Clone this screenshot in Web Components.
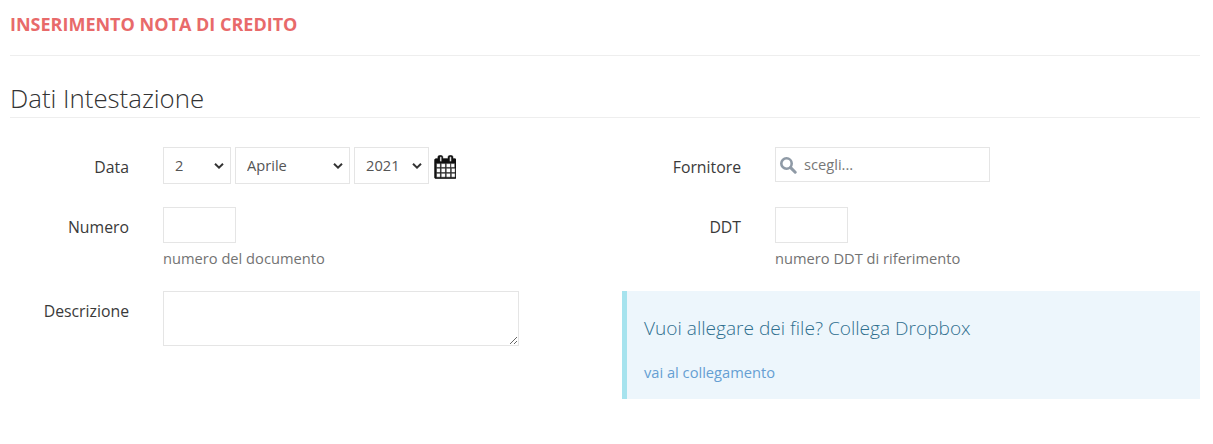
<!DOCTYPE html>
<html lang="it">
<head>
<meta charset="utf-8">
<title>Inserimento nota di credito</title>
<style>
  body {
    margin: 0;
    background: #fff;
    font-family: "Open Sans", sans-serif;
    font-size: 14.67px;
    color: #333;
  }
</style>
</head>
<body>
<invoice-page>
  <page-title slot="title">INSERIMENTO NOTA DI CREDITO</page-title>
  <section-title slot="section">Dati Intestazione</section-title>

  <form-row label="Data">
    <date-picker></date-picker>
  </form-row>
  <form-row label="Fornitore">
    <search-box placeholder="scegli..."></search-box>
  </form-row>

  <form-row label="Numero">
    <short-input hint="numero del documento"></short-input>
  </form-row>
  <form-row label="DDT">
    <short-input hint="numero DDT di riferimento"></short-input>
  </form-row>

  <form-row label="Descrizione">
    <note-area></note-area>
  </form-row>
  <info-box link="vai al collegamento">Vuoi allegare dei file? Collega Dropbox</info-box>
</invoice-page>

<script>
// small helper, every element below has the same constructor otherwise
class ShadowEl extends HTMLElement {
  constructor() {
    super();
    this.attachShadow({ mode: 'open' });
  }
  render(html) {
    const template = document.createElement('template');
    template.innerHTML = html;
    this.shadowRoot.appendChild(template.content.cloneNode(true));
  }
}

const FIELD_CSS = `
  select, input, textarea {
    box-sizing: border-box;
    border: 1px solid #e5e5e5;
    border-radius: 0;
    background: #fff;
    color: #555;
    font: 14.67px "Open Sans", sans-serif;
    margin: 0;
    outline: none;
  }
`;

class InvoicePage extends ShadowEl {
  connectedCallback() {
    this.render(`
      <style>
        :host { display: block; padding: 0 13px 0 10px; }
        .head { height: 55px; border-bottom: 1px solid #eee; }
        .grid {
          display: grid;
          grid-template-columns: 612px 578px;
          grid-template-rows: 60px 84px auto;
          padding-top: 29px;
        }
      </style>
      <div class="head"><slot name="title"></slot></div>
      <slot name="section"></slot>
      <div class="grid"><slot></slot></div>
    `);
  }
}

class PageTitle extends ShadowEl {
  connectedCallback() {
    this.render(`
      <style>
        :host {
          display: block;
          padding-top: 12px;
          font-size: 18px;
          line-height: 24px;
          font-weight: 700;
          color: #e86a6a;
        }
      </style>
      <slot></slot>
    `);
  }
}

class SectionTitle extends ShadowEl {
  connectedCallback() {
    this.render(`
      <style>
        :host {
          display: block;
          height: 62px;
          box-sizing: border-box;
          padding-top: 24px;
          font-size: 25.8px;
          line-height: 36px;
          font-weight: 300;
          color: #333;
          border-bottom: 1px solid #eee;
        }
      </style>
      <slot></slot>
    `);
  }
}

class FormRow extends ShadowEl {
  connectedCallback() {
    this.render(`
      <style>
        :host { display: flex; align-items: flex-start; gap: 34px; }
        label {
          flex: 0 0 119px;
          text-align: right;
          padding-top: 9px;
          font-size: 15.8px;
          line-height: 22px;
          color: #3a3a3a;
        }
      </style>
      <label>${this.getAttribute('label')}</label>
      <div><slot></slot></div>
    `);
  }
}

class DatePicker extends ShadowEl {
  connectedCallback() {
    const days = Array.from({ length: 31 }, (_, i) => `<option${i === 1 ? ' selected' : ''}>${i + 1}</option>`).join('');
    const months = ['Gennaio', 'Febbraio', 'Marzo', 'Aprile', 'Maggio', 'Giugno', 'Luglio', 'Agosto', 'Settembre', 'Ottobre', 'Novembre', 'Dicembre']
      .map(m => `<option${m === 'Aprile' ? ' selected' : ''}>${m}</option>`).join('');
    const chevron = `<svg class="chev" viewBox="0 0 10 6" fill="none" stroke="#333" stroke-width="2"><path d="M1 .8L5 4.6L9 .8"/></svg>`;
    this.render(`
      <style>
        ${FIELD_CSS}
        :host { display: flex; align-items: flex-start; gap: 4px; }
        .wrap { position: relative; display: block; }
        select { display: block; height: 37px; padding: 0 0 2px 10px; appearance: none; -webkit-appearance: none; }
        .chev { position: absolute; right: 7px; top: 16px; width: 10px; height: 6px; pointer-events: none; }
        .day { width: 68px; }
        .month { width: 115px; }
        .year { width: 75px; padding-left: 11px; }
        .day, .month { padding-left: 11px; }
        .cal { width: 22px; height: 24px; margin: 8px 0 0 1px; display: block; }
      </style>
      <span class="wrap"><select class="day">${days}</select>${chevron}</span>
      <span class="wrap"><select class="month">${months}</select>${chevron}</span>
      <span class="wrap"><select class="year"><option>2020</option><option selected>2021</option><option>2022</option></select>${chevron}</span>
      <svg class="cal" viewBox="0 0 1664 1792" fill="#111" stroke="#111" stroke-width="30"><path d="M192 1664h288v-288h-288v288zm352 0h320v-288h-320v288zm-352-352h288v-320h-288v320zm352 0h320v-320h-320v320zm-352-384h288v-288h-288v288zm736 736h320v-288h-320v288zm-384-736h320v-288h-320v288zm768 736h288v-288h-288v288zm-384-352h320v-320h-320v320zm-352-864v-288q0-13-9.5-22.5t-22.5-9.5h-64q-13 0-22.5 9.5t-9.5 22.5v288q0 13 9.5 22.5t22.5 9.5h64q13 0 22.5-9.5t9.5-22.5zm736 864h288v-320h-288v320zm-384-384h320v-288h-320v288zm352 0h288v-288h-288v288zm32-480v-288q0-13-9.5-22.5t-22.5-9.5h-64q-13 0-22.5 9.5t-9.5 22.5v288q0 13 9.5 22.5t22.5 9.5h64q13 0 22.5-9.5t9.5-22.5zm384-64v1280q0 52-38 90t-90 38h-1408q-52 0-90-38t-38-90v-1280q0-52 38-90t90-38h128v-96q0-66 47-113t113-47h64q66 0 113 47t47 113v96h384v-96q0-66 47-113t113-47h64q66 0 113 47t47 113v96h128q52 0 90 38t38 90z"/></svg>
    `);
  }
}

class SearchBox extends ShadowEl {
  connectedCallback() {
    this.render(`
      <style>
        ${FIELD_CSS}
        :host { display: block; position: relative; width: 215px; height: 35px; }
        input { width: 100%; height: 100%; padding: 0 8px 2px 28px; display: block; }
        input::placeholder { color: #777; opacity: 1; }
        svg { position: absolute; left: 4px; top: 9px; width: 18px; height: 18px; }
      </style>
      <input type="text" placeholder="${this.getAttribute('placeholder')}">
      <svg viewBox="0 0 18 18" fill="none" stroke="#8f9aa6">
        <circle cx="7.5" cy="7.5" r="5.2" stroke-width="2.6"/>
        <path d="M11.6 11.6L16.2 16.2" stroke-width="3" stroke-linecap="round"/>
      </svg>
    `);
  }
}

class ShortInput extends ShadowEl {
  connectedCallback() {
    this.render(`
      <style>
        ${FIELD_CSS}
        :host { display: block; }
        input { width: 73px; height: 36px; display: block; padding: 0 8px; }
        small { display: block; margin-top: 5px; font-size: 14.67px; line-height: 20px; color: #737373; white-space: nowrap; }
      </style>
      <input type="text">
      <small>${this.getAttribute('hint')}</small>
    `);
  }
}

class NoteArea extends ShadowEl {
  connectedCallback() {
    this.render(`
      <style>
        ${FIELD_CSS}
        :host { display: block; }
        textarea { width: 356px; height: 55px; display: block; padding: 6px 8px; }
      </style>
      <textarea></textarea>
    `);
  }
}

class InfoBox extends ShadowEl {
  connectedCallback() {
    this.render(`
      <style>
        :host {
          display: block;
          box-sizing: border-box;
          height: 108px;
          padding: 25px 17px 0;
          background: #edf6fc;
          border-left: 5px solid #a6e3ee;
          color: #2f6f8f;
        }
        h4 { margin: 0; font-size: 19.1px; line-height: 25px; font-weight: 300; }
        a { display: block; margin-top: 21px; font-size: 14.67px; line-height: 20px; color: #659fd3; text-decoration: none; }
      </style>
      <h4><slot></slot></h4>
      <a href="#">${this.getAttribute('link')}</a>
    `);
  }
}

customElements.define('invoice-page', InvoicePage);
customElements.define('page-title', PageTitle);
customElements.define('section-title', SectionTitle);
customElements.define('form-row', FormRow);
customElements.define('date-picker', DatePicker);
customElements.define('search-box', SearchBox);
customElements.define('short-input', ShortInput);
customElements.define('note-area', NoteArea);
customElements.define('info-box', InfoBox);
</script>
</body>
</html>
